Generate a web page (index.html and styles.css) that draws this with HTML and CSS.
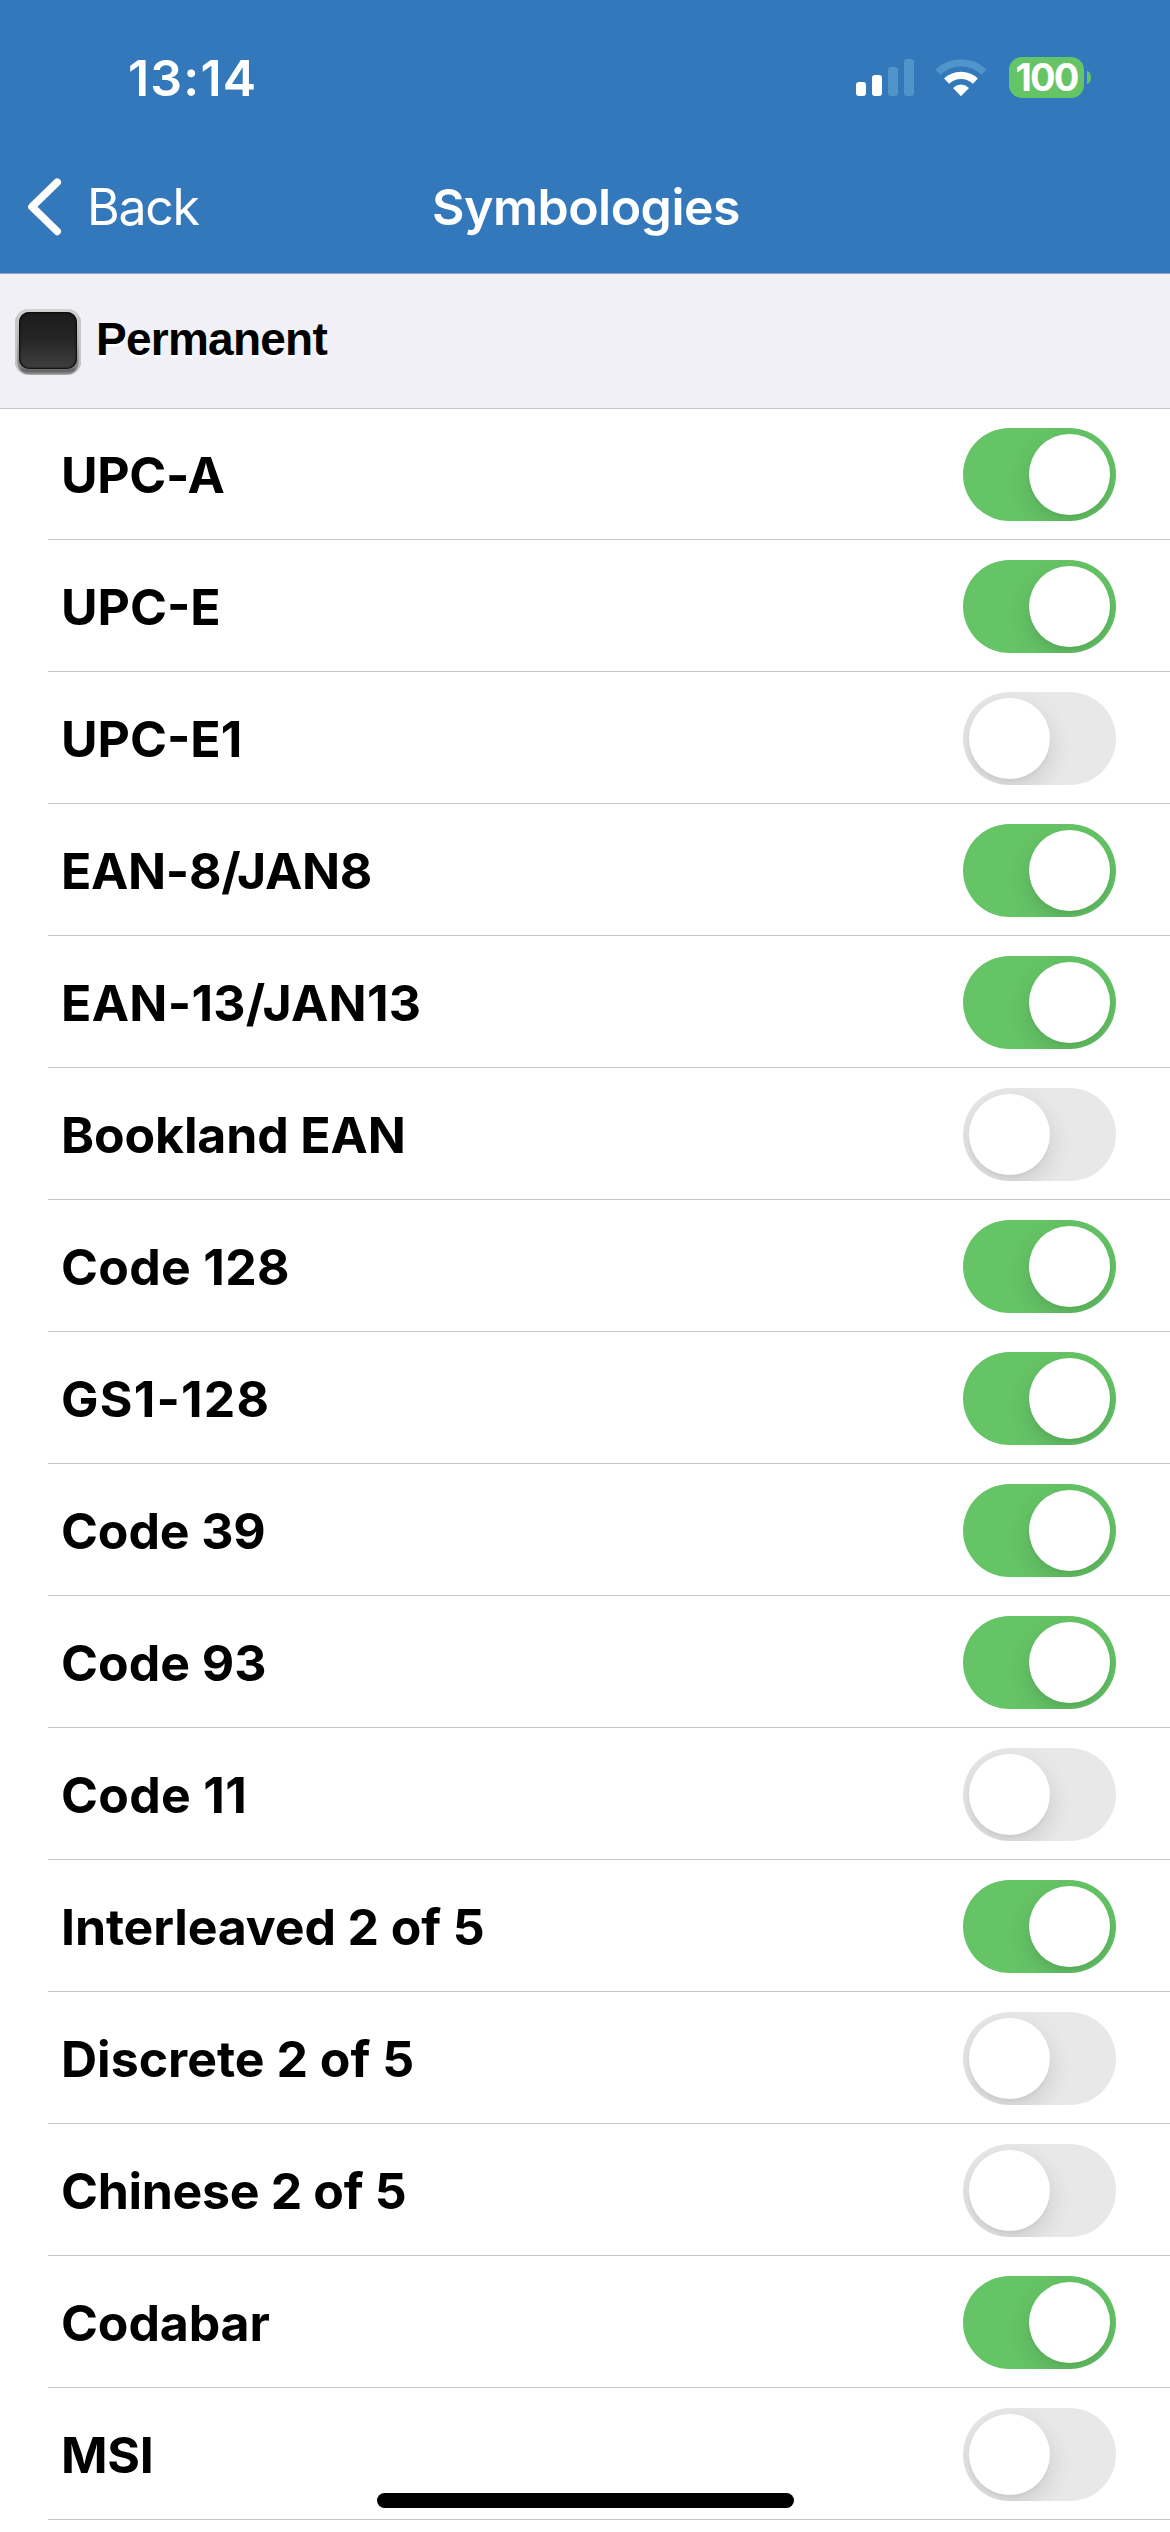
FILE: index.html
```html
<!DOCTYPE html>
<html lang="en">
<head>
<meta charset="utf-8">
<title>Symbologies</title>
<link rel="stylesheet" href="styles.css">
</head>
<body>
<header class="header">
  <div class="status">
    <span class="time">13:14</span>
    <div class="indicators">
      <svg class="signal" width="58" height="37" viewBox="0 0 58 37" fill="#fff">
        <rect x="0" y="23" width="10" height="14" rx="3"/>
        <rect x="16" y="16" width="10" height="21" rx="3"/>
        <g fill="#5194c9"><rect x="32" y="8" width="10" height="29" rx="3"/><rect x="48" y="0" width="10" height="37" rx="3"/></g>
      </svg>
      <svg class="wifi" width="52" height="38" viewBox="0 0 52 38" fill="none" stroke-width="7.2">
        <path d="M2.9 13.2A33.3 33.3 0 0 1 49.1 13.2" stroke="#5194c9"/>
        <path d="M11.6 22.2A20.8 20.8 0 0 1 40.4 22.2" stroke="#fff"/>
        <path d="M26 37.3L18 29Q26 22.2 34 29Z" fill="#fff"/>
      </svg>
      <span class="battery">100</span>
      <span class="nub"></span>
    </div>
  </div>
  <nav class="nav">
    <a class="back">
      <svg width="34" height="58" viewBox="0 0 34 58" fill="none" stroke="#fff" stroke-width="7.6" stroke-linecap="round" stroke-linejoin="round"><path d="M29.2 4.2L4 28.8L29.2 53.4"/></svg>
      <span>Back</span>
    </a>
    <h1 class="title">Symbologies</h1>
    <span></span>
  </nav>
</header>
<section class="section">
  <span class="checkbox"><span class="face"></span></span>
  <span class="permanent">Permanent</span>
</section>
<ul class="list">
  <li class="row"><span class="label tight">UPC-A</span><span class="switch on"></span></li>
  <li class="row"><span class="label">UPC-E</span><span class="switch on"></span></li>
  <li class="row"><span class="label">UPC-E1</span><span class="switch"></span></li>
  <li class="row"><span class="label tight">EAN-8/JAN8</span><span class="switch on"></span></li>
  <li class="row"><span class="label wide">EAN-13/JAN13</span><span class="switch on"></span></li>
  <li class="row"><span class="label snug">Bookland EAN</span><span class="switch"></span></li>
  <li class="row"><span class="label wide">Code 128</span><span class="switch on"></span></li>
  <li class="row"><span class="label wider">GS1-128</span><span class="switch on"></span></li>
  <li class="row"><span class="label snug">Code 39</span><span class="switch on"></span></li>
  <li class="row"><span class="label">Code 93</span><span class="switch on"></span></li>
  <li class="row"><span class="label wide">Code 11</span><span class="switch"></span></li>
  <li class="row"><span class="label snug">Interleaved 2 of 5</span><span class="switch on"></span></li>
  <li class="row"><span class="label">Discrete 2 of 5</span><span class="switch"></span></li>
  <li class="row"><span class="label tight">Chinese 2 of 5</span><span class="switch"></span></li>
  <li class="row"><span class="label snug">Codabar</span><span class="switch on"></span></li>
  <li class="row"><span class="label tight">MSI</span><span class="switch"></span></li>
</ul>
<div class="home-indicator"></div>
</body>
</html>
```
FILE: styles.css
```css
* { box-sizing: border-box; }

body {
  margin: 0;
  width: 1170px;
  height: 2532px;
  position: relative;
  overflow: hidden;
  background: #fff;
  color: #000;
  font-family: Inter, "Liberation Sans", sans-serif;
}

.header {
  height: 274px;
  background: #3478bc;
  border-bottom: 1px solid #8fa9cb;
  color: #fff;
}

.status {
  height: 154px;
  padding: 0 79px 0 128px;
  display: flex;
  justify-content: space-between;
  align-items: center;
}

.time {
  font-size: 50px;
  font-weight: 600;
  line-height: 60px;
  letter-spacing: 1.2px;
  padding-top: 2px;
}

.indicators { display: flex; align-items: center; padding-top: 1px; }
.signal { margin-right: 21px; }
.wifi { margin-right: 22px; }

.battery {
  width: 75px;
  height: 41px;
  border-radius: 13px;
  background: #65c466;
  font-size: 38px;
  font-weight: 700;
  line-height: 41px;
  letter-spacing: -1.9px;
  text-align: center;
}

.nub {
  width: 4px;
  height: 13px;
  margin-left: 3px;
  border-radius: 0 4px 4px 0 / 0 6.5px 6.5px 0;
  background: #65c466;
}

.nav {
  height: 105px;
  padding-left: 28px;
  display: grid;
  grid-template-columns: 300px 1fr 328px;
  align-items: center;
  font-size: 50px;
  line-height: 60px;
}

.back { display: flex; align-items: center; gap: 25px; letter-spacing: -1.3px; }
.back span { padding-top: 1px; }

.title {
  margin: 0;
  font-size: 50px;
  font-weight: 600;
  letter-spacing: -0.5px;
  text-align: center;
  padding: 1px 0 0 2px;
}

.section {
  height: 135px;
  padding: 35px 0 0 15px;
  display: flex;
  align-items: flex-start;
  gap: 15px;
  background: #f1f0f6;
  border-bottom: 1px solid #c6c6c8;
}

.checkbox {
  width: 66px;
  height: 66px;
  padding: 3px 4px 6px 4px;
  border-radius: 14px;
  background: linear-gradient(#d4d4d4, #b0b0b0 50%, #8a8a8a 85%, #626262 94%, #a5a5a5);
  box-shadow: inset 2px 0 1px #c8c8c8, inset -2px 0 1px #c8c8c8;
}

.face {
  display: block;
  height: 57px;
  border-radius: 10px;
  background: linear-gradient(#1c1c1c, #242424 45%, #404040);
  box-shadow: inset 0 0 2px 1px #080808;
}

.permanent {
  padding-top: 4px;
  font: bold 46px/52px "Liberation Sans", Arial, sans-serif;
  letter-spacing: -0.75px;
  text-shadow: 0 3px 0 #fff;
}

.list { list-style: none; margin: -1px 0 0 48px; padding: 0; }

.row {
  height: 132px;
  padding: 20px 54px 0 13px;
  display: flex;
  align-items: flex-start;
  justify-content: space-between;
  border-bottom: 1px solid #c6c6c8;
}

.label {
  padding-top: 1px;
  font-size: 50px;
  font-weight: 700;
  line-height: 92px;
}

.tight { letter-spacing: -0.32px; }
.snug { letter-spacing: -0.13px; }
.wide { letter-spacing: 0.3px; }
.wider { letter-spacing: 1.2px; }

.switch {
  width: 153px;
  height: 93px;
  padding: 6px;
  display: flex;
  border-radius: 47px;
  background: #e8e8e8;
  overflow: hidden;
}

.switch::before {
  content: "";
  width: 81px;
  height: 81px;
  border-radius: 50%;
  background: #fff;
  box-shadow: 0 9px 24px rgba(0, 0, 0, 0.13), 0 3px 3px rgba(0, 0, 0, 0.03);
}

.on { background: #65c466; justify-content: flex-end; }

.home-indicator {
  position: absolute;
  left: 377px;
  bottom: 24px;
  width: 417px;
  height: 15px;
  border-radius: 8px;
  background: #000;
}
```
